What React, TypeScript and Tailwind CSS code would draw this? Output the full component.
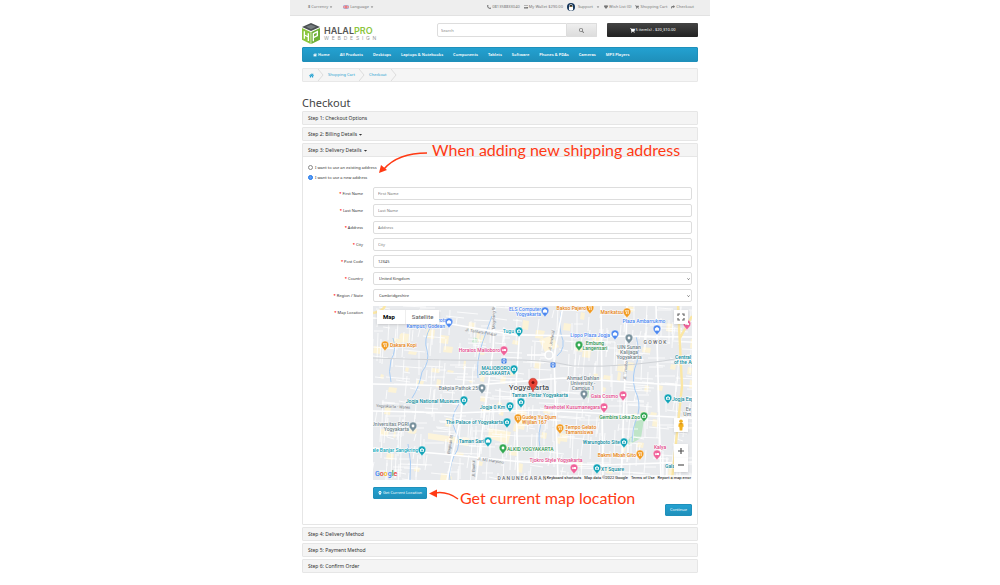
import { useState } from "react";
import type { ReactNode } from "react";
import {
  FaBed,
  FaCaretDown,
  FaCreditCard,
  FaHeart,
  FaHome,
  FaMapMarkerAlt,
  FaPhone,
  FaSearch,
  FaShare,
  FaShoppingCart,
} from "react-icons/fa";

const BLUE = "#4a86f0";
const TEAL = "#12a4b8";
const ORANGE = "#f29a1f";
const PINK = "#f0629a";
const GREEN = "#34a853";
const GREY = "#78909c";

const navItems = [
  "All Products",
  "Desktops",
  "Laptops & Notebooks",
  "Components",
  "Tablets",
  "Software",
  "Phones & PDAs",
  "Cameras",
  "MP3 Players",
];

const textFields = [
  { id: "firstname", label: "First Name", value: "" },
  { id: "lastname", label: "Last Name", value: "" },
  { id: "address", label: "Address", value: "" },
  { id: "city", label: "City", value: "" },
  { id: "postcode", label: "Post Code", value: "12345" },
];

const selectFields = [
  { id: "country", label: "Country", value: "United Kingdom" },
  { id: "zone", label: "Region / State", value: "Cambridgeshire" },
];

type Kind = "shop" | "food" | "bed" | "sight" | "dot";

// x, y is the centre of the pin's head
const pins: { x: number; y: number; color: string; kind: Kind }[] = [
  { x: 76, y: 16, color: BLUE, kind: "shop" },
  { x: 146, y: 25, color: TEAL, kind: "sight" },
  { x: 12, y: 39, color: ORANGE, kind: "food" },
  { x: 131, y: 44, color: PINK, kind: "bed" },
  { x: 141, y: 63, color: TEAL, kind: "sight" },
  { x: 109, y: 82, color: GREY, kind: "dot" },
  { x: 172, y: 5, color: BLUE, kind: "shop" },
  { x: 217, y: 2, color: ORANGE, kind: "food" },
  { x: 254, y: 6, color: ORANGE, kind: "food" },
  { x: 284, y: 23, color: BLUE, kind: "shop" },
  { x: 314, y: 18, color: PINK, kind: "bed" },
  { x: 242, y: 28, color: BLUE, kind: "shop" },
  { x: 256, y: 32, color: GREY, kind: "dot" },
  { x: 206, y: 39, color: GREEN, kind: "dot" },
  { x: 211, y: 88, color: GREY, kind: "dot" },
  { x: 91, y: 94, color: TEAL, kind: "sight" },
  { x: 148, y: 96, color: TEAL, kind: "sight" },
  { x: 137, y: 100, color: TEAL, kind: "sight" },
  { x: 145, y: 112, color: ORANGE, kind: "food" },
  { x: 134, y: 116, color: TEAL, kind: "sight" },
  { x: 40, y: 120, color: GREY, kind: "dot" },
  { x: 115, y: 135, color: TEAL, kind: "shop" },
  { x: 49, y: 144, color: TEAL, kind: "sight" },
  { x: 130, y: 142, color: GREEN, kind: "dot" },
  { x: 250, y: 89, color: PINK, kind: "bed" },
  { x: 295, y: 92, color: TEAL, kind: "sight" },
  { x: 231, y: 101, color: PINK, kind: "bed" },
  { x: 271, y: 110, color: GREEN, kind: "sight" },
  { x: 187, y: 122, color: ORANGE, kind: "food" },
  { x: 251, y: 136, color: TEAL, kind: "sight" },
  { x: 267, y: 148, color: ORANGE, kind: "food" },
  { x: 284, y: 148, color: PINK, kind: "bed" },
  { x: 201, y: 162, color: PINK, kind: "bed" },
  { x: 224, y: 162, color: TEAL, kind: "sight" },
];

type Anchor = "start" | "middle" | "end";

const labels: { x: number; y: number; text: string; color: string; anchor: Anchor }[] = [
  { x: 74, y: 16, text: "irota", color: BLUE, anchor: "end" },
  { x: 72, y: 22, text: "Kampus) Godean", color: BLUE, anchor: "end" },
  { x: 168, y: 5, text: "ELS Computer", color: BLUE, anchor: "end" },
  { x: 168, y: 10, text: "Yogyakarta", color: BLUE, anchor: "end" },
  { x: 141, y: 27, text: "Tugu", color: TEAL, anchor: "end" },
  { x: 17, y: 41, text: "Dakara Kopi", color: "#e37e0c", anchor: "start" },
  { x: 127, y: 46, text: "Horaios Malioboro", color: "#e0478a", anchor: "end" },
  { x: 137, y: 64, text: "MALIOBORO", color: "#0b8a9c", anchor: "end" },
  { x: 137, y: 69, text: "JOGJAKARTA", color: "#0b8a9c", anchor: "end" },
  { x: 105, y: 84, text: "Bakpia Pathok 25", color: "#6f7f88", anchor: "end" },
  { x: 213, y: 4, text: "Bakso Pajero", color: "#e37e0c", anchor: "end" },
  { x: 250, y: 8, text: "Marikatsu", color: "#e37e0c", anchor: "end" },
  { x: 271, y: 17, text: "Plaza Ambarrukmo", color: BLUE, anchor: "middle" },
  { x: 237, y: 31, text: "Lippo Plaza Jogja", color: BLUE, anchor: "end" },
  { x: 222, y: 39, text: "Embung", color: "#2d9150", anchor: "middle" },
  { x: 222, y: 44, text: "Langensari", color: "#2d9150", anchor: "middle" },
  { x: 256, y: 43, text: "UIN Sunan", color: "#6f7f88", anchor: "middle" },
  { x: 256, y: 48, text: "Kalijaga", color: "#6f7f88", anchor: "middle" },
  { x: 256, y: 53, text: "Yogyakarta", color: "#6f7f88", anchor: "middle" },
  { x: 282, y: 38, text: "G O W O K", color: "#5f6368", anchor: "middle" },
  { x: 302, y: 53, text: "Central", color: "#0b8a9c", anchor: "start" },
  { x: 301, y: 58, text: "of the Ar", color: "#0b8a9c", anchor: "start" },
  { x: 210, y: 74, text: "Ahmad Dahlan", color: "#6f7f88", anchor: "middle" },
  { x: 210, y: 79, text: "University -", color: "#6f7f88", anchor: "middle" },
  { x: 210, y: 84, text: "Campus 1", color: "#6f7f88", anchor: "middle" },
  { x: 195, y: 91, text: "Taman Pintar Yogyakarta", color: "#0b8a9c", anchor: "end" },
  { x: 86, y: 97, text: "Jogja National Museum", color: "#0b8a9c", anchor: "end" },
  { x: 132, y: 103, text: "Jogja 0 Km", color: "#0b8a9c", anchor: "end" },
  { x: 149, y: 113, text: "Gudeg Yu Djum", color: "#e37e0c", anchor: "start" },
  { x: 149, y: 118, text: "Wijilan 167", color: "#e37e0c", anchor: "start" },
  { x: 130, y: 118, text: "The Palace of Yogyakarta", color: "#0b8a9c", anchor: "end" },
  { x: 36, y: 120, text: "Universitas PGRI", color: "#6f7f88", anchor: "end" },
  { x: 36, y: 125, text: "Yogyakarta", color: "#6f7f88", anchor: "end" },
  { x: 111, y: 137, text: "Taman Sari", color: "#0b8a9c", anchor: "end" },
  { x: 45, y: 146, text: "ale Banjar Sangkring", color: TEAL, anchor: "end" },
  { x: 134, y: 145, text: "ALKID YOGYAKARTA", color: "#2d9150", anchor: "start" },
  { x: 245, y: 92, text: "Gaia Cosmo", color: "#e0478a", anchor: "end" },
  { x: 227, y: 103, text: "favehotel Kusumanegara", color: "#e0478a", anchor: "end" },
  { x: 299, y: 95, text: "Jogja Exp", color: "#0b8a9c", anchor: "start" },
  { x: 267, y: 113, text: "Gembira Loka Zoo", color: "#2d9150", anchor: "end" },
  { x: 318, y: 105, text: "Ev", color: "#6f7f88", anchor: "end" },
  { x: 318, y: 110, text: "Um", color: "#6f7f88", anchor: "end" },
  { x: 192, y: 123, text: "Tempo Gelato", color: "#e37e0c", anchor: "start" },
  { x: 192, y: 128, text: "Tamansiswa", color: "#e37e0c", anchor: "start" },
  { x: 247, y: 138, text: "Warungboto Site", color: "#0b8a9c", anchor: "end" },
  { x: 263, y: 151, text: "Bakmi Mbah Gito", color: "#e37e0c", anchor: "end" },
  { x: 287, y: 143, text: "Kalya", color: "#e0478a", anchor: "middle" },
  { x: 183, y: 156, text: "Tjokro Style Yogyakarta", color: "#e0478a", anchor: "middle" },
  { x: 228, y: 165, text: "XT Square", color: "#0b8a9c", anchor: "start" },
  { x: 292, y: 162, text: "Gala", color: "#0b8a9c", anchor: "start" },
  { x: 149, y: 174, text: "D A N U N E G A R A N", color: "#5f6368", anchor: "middle" },
];

// Small seeded generator so the street grid is the same on every render
function makeStreets() {
  let seed = 17;
  const rand = () => {
    seed = (seed * 16807) % 2147483647;
    return seed / 2147483647;
  };
  let minor = "";
  let yellow = "";
  for (let i = 0; i < 560; i++) {
    const x = Math.round(rand() * 319);
    const y = Math.round(rand() * 174);
    const len = Math.round(6 + rand() * 22);
    const skew = Math.round(rand() * 2);
    minor += rand() > 0.45 ? `M${x} ${y}l${-skew} ${len}` : `M${x} ${y}l${len} ${skew}`;
  }
  for (let i = 0; i < 90; i++) {
    const x = Math.round(rand() * 319);
    const y = Math.round(rand() * 174);
    const w = Math.round(2 + rand() * 7);
    const h = Math.round(2 + rand() * 7);
    yellow += `M${x} ${y}l${w} 1l-1 ${h}l${-w} -1z`;
  }
  return { minor, yellow };
}

const streets = makeStreets();

function PinGlyph({ kind }: { kind: Kind }) {
  if (kind === "shop") return <path d="M-1.8 -1h3.6l.3 2.6h-4.2zM-.9 -1q.9 -1.8 1.8 0" fill="#fff" stroke="#fff" strokeWidth=".3" />;
  if (kind === "food") return <path d="M-1.2 -2v1.6q.1 .6 .6 .6v1.9M0 -2v1.4M1.2 -2v4.1" stroke="#fff" strokeWidth=".8" fill="none" />;
  if (kind === "bed") return <FaBed x={-2.2} y={-2.2} width={4.4} height={4.4} size={4.4} color="#fff" />;
  if (kind === "sight") return <path d="M-1.9 -1h.9l.5 -.7h1l.5 .7h.9v2.7h-3.8zM0 -.5a.8 .8 0 1 0 .1 0z" fill="#fff" fillRule="evenodd" />;
  return <circle r="1.4" fill="#fff" />;
}

function MapDrawing() {
  return (
    <svg viewBox="0 0 319 174" preserveAspectRatio="xMidYMid slice" className="block h-[174px] w-full bg-[#e8eaed]" role="img" aria-label="Map of Yogyakarta">
      <path d={streets.yellow} fill="#fcf3d7" />
      <path d="M166 34l13 -5l7 12l-14 5zM144 103l10 3l-3 18l-9 -2zM55 127l34 5v6l-34 -5zM116 122l22 4l-3 12l-20 -6z" fill="#fdf4da" />
      <path d="M261 116l10 -3l-3 19l-12 7l-2 -4l6 -6zM101 31l4 2l-2 5l-4 -2zM211 80l5 2v10l-6 -2z" fill="#bfe5c8" />
      <path d={streets.minor} stroke="#fff" strokeWidth=".8" fill="none" />
      <path
        d="M58 20q-8 14 -4 24q3 12 -5 22q-3 16 -10 26M86 98q-10 14 -4 26q8 14 -1 26q-6 14 -4 24M263 30q4 14 1 26q-6 14 -2 28q6 12 3 24q-6 14 -6 28M20 32q4 12 -2 22q-3 12 0 22M190 0q-5 16 -2 28q6 14 -4 22M119 10q-6 16 -10 28q-6 18 -4 34M170 112q-6 14 -3 30M35 138q4 18 2 36"
        stroke="#a9cdf5"
        strokeWidth="1"
        fill="none"
      />
      <path
        d="M0 12l78 6l64 11l177 2M0 105l83 2l80 -3l156 8M0 142l70 6l80 8l80 3l89 -3M122 0l-2 44l-8 60l-9 70M92 60l-4 50l-14 64M147 20l-4 60l2 94M190 0l-9 50l4 124M228 0l2 174M254 0l-2 70l-4 104M0 78l90 2l100 -8l129 8M283 0l5 174M176 49h-22"
        stroke="#fff"
        strokeWidth="1.6"
        fill="none"
      />
      <path d="M305 0l4 80l-10 94M319 10l-12 22M0 7q10 -2 12 -7" stroke="#fbe7a5" strokeWidth="2.4" fill="none" />
      <path d="M0 52q90 3 130 2t70 6q60 2 119 -10" stroke="#cfd2d6" strokeWidth="1" fill="none" />
      <circle cx="176" cy="49" r="4" fill="#e8eaed" stroke="#fff" strokeWidth="1.6" />

      <g fontFamily="Roboto, sans-serif" fontSize="4" fill="#777c82">
        <text x="92" y="25" transform="rotate(9 92 25)">Jl. Tentara Pelajar</text>
        <text x="3" y="101" transform="rotate(3 3 101)">Yogyakarta - Wates</text>
        <text x="104" y="154" transform="rotate(8 104 154)">Jl. MT Haryono</text>
        <text x="122" y="23" transform="rotate(-90 122 23)">Magelang St</text>
        <text x="77" y="148" transform="rotate(-82 77 148)">Bugisan St</text>
        <text x="102" y="171" transform="rotate(-90 102 171)">Jl. Bantul</text>
        <text x="178" y="45" transform="rotate(-80 178 45)">Jl. Jenderal</text>
        <text x="253" y="74" transform="rotate(-85 253 74)">Jl. Timoho</text>
      </g>

      <g fontFamily="Roboto, sans-serif" fontSize="5" fontWeight="500" stroke="#fff" strokeWidth="1" paintOrder="stroke" strokeLinejoin="round">
        {labels.map((label) => (
          <text key={label.text + label.y} x={label.x} y={label.y} fill={label.color} textAnchor={label.anchor}>
            {label.text}
          </text>
        ))}
        <text x="156" y="84" fontSize="8" fill="#4c5156" textAnchor="middle">
          Yogyakarta
        </text>
      </g>

      {pins.map((pin) => (
        <g key={`${pin.x}-${pin.y}`} transform={`translate(${pin.x} ${pin.y})`}>
          <path d="M0 6.5C-.6 4 -3.8 3 -3.8 -.2A3.8 3.8 0 0 1 3.8 -.2C3.8 3 .6 4 0 6.5z" fill={pin.color} stroke="#fff" strokeWidth=".4" />
          <PinGlyph kind={pin.kind} />
        </g>
      ))}
      {[[131, 55], [180, 59]].map(([x, y]) => (
        <g key={x} transform={`translate(${x} ${y})`}>
          <rect x="-2.5" y="-2.5" width="5" height="5" rx="1" fill="#3f7ee8" />
          <path d="M-1 -1.4h2v2.2h-2zM-1 1.6h2" stroke="#fff" strokeWidth=".6" fill="none" />
        </g>
      ))}
      <path d="M160 86C159.400 81.500 155.700 80.500 155.700 76.500A4.300 4.300 0 0 1 164.300 76.500C164.300 80.500 160.600 81.500 160 86z" fill="#ea4335" stroke="#b3261e" strokeWidth=".4" />
      <circle cx="160" cy="76.500" r="1.500" fill="#7c1510" />
    </svg>
  );
}

function LocationMap() {
  const controlClass = "flex w-3.5 items-center justify-center bg-white shadow-sm";
  return (
    <div className="relative min-w-0 overflow-hidden font-[Roboto,sans-serif]">
      <MapDrawing />
      <div className="absolute left-1 top-1 flex h-3.5 items-center bg-white text-[6px] leading-none shadow-sm">
        <button type="button" className="pl-1.5 pr-2.5 font-bold text-black">Map</button>
        <button type="button" className="h-full border-l border-[#eee] px-1.5 text-[#565656]">Satellite</button>
      </div>
      <button type="button" aria-label="Toggle fullscreen view" className={`absolute right-1 top-1 h-3.5 ${controlClass}`}>
        <svg viewBox="0 0 8 8" className="size-2" fill="none" stroke="#666" strokeWidth="1.2">
          <path d="M1 3V1h2M5 1h2v2M7 5v2H5M3 7H1V5" />
        </svg>
      </button>
      <div className="absolute bottom-2 right-1 flex flex-col gap-3">
        <button type="button" aria-label="Street View" className={`h-3.5 ${controlClass}`}>
          <svg viewBox="0 0 8 12" className="h-3 w-2">
            <circle cx="4" cy="2.300" r="1.800" fill="#f2b01e" />
            <path d="M1.800 4.200h4.400l.5 3.500h-1l-.4 3.800H2.700L2.300 7.700h-1z" fill="#f2b01e" />
            <path d="M2.500 4.200h3L4 5.600z" fill="#c77f12" />
          </svg>
        </button>
        <div>
          <button type="button" aria-label="Zoom in" className={`h-3.5 ${controlClass}`}>
            <svg viewBox="0 0 8 8" className="size-2" stroke="#555" strokeWidth="1.2"><path d="M4 1v6M1 4h6" /></svg>
          </button>
          <button type="button" aria-label="Zoom out" className={`h-3.5 ${controlClass}`}>
            <svg viewBox="0 0 8 8" className="size-2" stroke="#555" strokeWidth="1.2"><path d="M1 4h6" /></svg>
          </button>
        </div>
      </div>
      <div className="absolute bottom-0.5 left-0.5 text-[7px] font-medium leading-none">
        <span className="text-[#4285f4]">G</span>
        <span className="text-[#ea4335]">o</span>
        <span className="text-[#fbbc05]">o</span>
        <span className="text-[#4285f4]">g</span>
        <span className="text-[#34a853]">l</span>
        <span className="text-[#ea4335]">e</span>
      </div>
      <div className="absolute bottom-0 right-0 flex gap-[3px] bg-white/70 px-px text-[4px] leading-[5px] text-black">
        <button type="button">Keyboard shortcuts</button>
        <span>Map data ©2022 Google</span>
        <a href="#terms">Terms of Use</a>
        <a href="#report">Report a map error</a>
      </div>
    </div>
  );
}

function Logo() {
  return (
    <a href="#home" className="flex items-center gap-1">
      <svg viewBox="0 0 54 63" className="h-[21px] w-[18px]">
        <path d="M27 0L54 12L27 24L0 12z" fill="#4b5052" />
        <path d="M27 5l15 6.500l-15 7l-15 -7z" fill="#777d80" />
        <path d="M0 15l26 12v36L0 50z" fill="#8cc63f" />
        <path d="M54 15L28 27v36l26 -13z" fill="#6fb036" />
        <path d="M7 25v22M7 36l12 6M19 31v23" stroke="#fff" strokeWidth="4" fill="none" />
        <path d="M34 55V32l12 -6v12l-12 6" stroke="#fff" strokeWidth="4" fill="none" />
      </svg>
      <span className="font-[Inter,sans-serif] leading-none">
        <span className="block text-[9px] font-semibold leading-[9px] text-[#555]">
          HALAL<span className="text-[#8cc63f]">PRO</span>
        </span>
        <span className="block whitespace-pre text-[5px] leading-[6px] text-[#999]">{"W  E  B  D  E  S  I  G  N"}</span>
      </span>
    </a>
  );
}

function Flag() {
  return (
    <svg viewBox="0 0 16 11" className="h-1 w-1.5">
      <path d="M0 0h16v11H0z" fill="#5571b8" />
      <path d="M0 0l16 11M16 0L0 11" stroke="#fff" strokeWidth="2.500" />
      <path d="M8 0v11M0 5.500h16" stroke="#fff" strokeWidth="4" />
      <path d="M8 0v11M0 5.500h16" stroke="#e0323c" strokeWidth="2.200" />
    </svg>
  );
}

function Avatar() {
  return (
    <svg viewBox="0 0 24 24" className="size-2">
      <circle cx="12" cy="12" r="12" fill="#15365c" />
      <path d="M6 21q-1 -13 3 -17q3 -2 6 0q4 4 3 17q-6 4 -12 0z" fill="#fff" />
      <path d="M8 8q4 -7 8 0v4H8z" fill="#1c2733" />
      <path d="M10 10l2 -2l2 2l-2 3z" fill="#f0ac2d" />
    </svg>
  );
}

function TopBar() {
  const linkClass = "flex items-center gap-px";
  return (
    <div className="flex h-4 items-center justify-between border-b border-[#e2e2e2] bg-[#eee] pb-px pl-[18px] pr-4 text-[#777]">
      <div className="flex items-center gap-2.5">
        <button type="button" className={linkClass}><b>$</b> Currency <FaCaretDown /></button>
        <button type="button" className={linkClass}><Flag /> Language <FaCaretDown /></button>
      </div>
      <div className="flex items-center gap-1">
        <a href="tel:081358833040" className={linkClass}><FaPhone className="-scale-x-100" /> 081358833040</a>
        <a href="#wallet" className={linkClass}><FaCreditCard /> My Wallet $290.00</a>
        <button type="button" className="flex items-center gap-[3px]"><Avatar /> Support <FaCaretDown /></button>
        <a href="#wishlist" className={linkClass}><FaHeart /> Wish List (0)</a>
        <a href="#cart" className={linkClass}><FaShoppingCart /> Shopping Cart</a>
        <a href="#checkout" className={linkClass}><FaShare /> Checkout</a>
      </div>
    </div>
  );
}

function CrumbArrow() {
  return (
    <svg viewBox="0 0 6 12" className="h-3 w-1.5" fill="none" stroke="#ddd">
      <path d="M0 0l5 6l-5 6" />
    </svg>
  );
}

function Panel({ title, caret, note, children }: { title: string; caret?: boolean; note?: ReactNode; children?: ReactNode }) {
  return (
    <section className="rounded-[1px] border border-[#e6e6e6]">
      <div className="relative flex h-3 items-center bg-[#f4f4f4] px-[5px]">
        <h2 className="text-[5px] text-[#333]">
          <button type="button" className="flex items-center">
            {title}
            {caret && <FaCaretDown className="ml-px" />}
          </button>
        </h2>
        {note}
      </div>
      {children}
    </section>
  );
}

function FieldLabel({ htmlFor, text }: { htmlFor?: string; text: string }) {
  return (
    <label htmlFor={htmlFor} className="h-[13px] text-right leading-[13px]">
      <span className="font-bold text-[#f00]">* </span>
      {text}
    </label>
  );
}

const boxClass = "h-[13px] w-full min-w-0 rounded-[2px] border border-[#ddd] bg-white text-[#333] outline-none";
const blueButton = "flex items-center justify-center gap-px rounded-[1px] border border-[#1f90bb] bg-linear-to-b from-[#23a1d1] to-[#1f90bb] text-white";

function DeliveryForm() {
  const [mode, setMode] = useState("new");

  return (
    <form className="border-t border-[#e6e6e6] px-[5px] pb-2 pt-2 text-[#333]" onSubmit={(e) => e.preventDefault()}>
      <div className="flex flex-col items-start gap-[5px] pb-[7px]">
        {[
          ["existing", "I want to use an existing address"],
          ["new", "I want to use a new address"],
        ].map(([value, text]) => (
          <label key={value} className="flex h-[5px] items-center gap-0.5">
            <input
              type="radio"
              name="shipping_address"
              value={value}
              checked={mode === value}
              onChange={() => setMode(value)}
              className="size-[5px] appearance-none rounded-full border border-[#888] checked:border-[#1a73e8] checked:bg-[#5b9df5]"
            />
            {text}
          </label>
        ))}
      </div>

      <div className="grid grid-cols-[55px_minmax(0,1fr)] gap-x-2.5 gap-y-1">
        {textFields.map((field) => (
          <div key={field.id} className="contents">
            <FieldLabel htmlFor={field.id} text={field.label} />
            <input id={field.id} type="text" placeholder={field.label} defaultValue={field.value} className={`px-1 placeholder:text-[#777] ${boxClass}`} />
          </div>
        ))}
        {selectFields.map((field) => (
          <div key={field.id} className="contents">
            <FieldLabel htmlFor={field.id} text={field.label} />
            <div className="relative">
              <select id={field.id} defaultValue={field.value} className={`block appearance-none px-[5px] ${boxClass}`}>
                <option>{field.value}</option>
              </select>
              <svg viewBox="0 0 8 5" className="pointer-events-none absolute right-0.5 top-1.5 h-0.5 w-[3px]" fill="none" stroke="#444" strokeWidth="2">
                <path d="M1 1l3 3l3 -3" />
              </svg>
            </div>
          </div>
        ))}
        <FieldLabel text="Map Location" />
        <LocationMap />
        <div className="relative col-start-2 flex pt-[3px]">
          <button type="button" className={`h-3 w-[54px] ${blueButton}`}>
            <FaMapMarkerAlt /> Get Current Location
          </button>
          <div className="absolute left-[56px] top-0 flex text-[#ff3a14]">
            <svg viewBox="0 0 30 18" className="h-[18px] w-[30px]" fill="none">
              <path d="M6 9q12 -2 23 6" stroke="currentColor" strokeWidth="1.500" />
              <path d="M0 9.500l8 -4v8z" fill="currentColor" />
            </svg>
            <span className="ml-px mt-1 whitespace-nowrap font-[Lato,sans-serif] text-[16px] leading-5">Get current map location</span>
          </div>
        </div>
      </div>
      <div className="flex justify-end pt-[5px]">
        <button type="submit" className={`h-3 w-[27px] ${blueButton}`}>Continue</button>
      </div>
    </form>
  );
}

function ShippingNote() {
  return (
    <div className="pointer-events-none absolute left-[75px] top-0 flex text-[#ff3a14]">
      <svg viewBox="0 0 50 32" className="h-8 w-[50px]" fill="none">
        <path d="M6 25q14 -16 43 -16" stroke="currentColor" strokeWidth="1.500" />
        <path d="M1 29l2 -8l6 5z" fill="currentColor" />
      </svg>
      <span className="-mt-1 ml-1 whitespace-nowrap font-[Lato,sans-serif] text-[16px] leading-5">When adding new shipping address</span>
    </div>
  );
}

export default function App() {
  return (
    <div className="min-h-screen bg-white">
      <div className="mx-auto w-full max-w-[420px] font-['Noto_Sans','Open_Sans',sans-serif] text-[4px] leading-none text-[#555]">
        <TopBar />
        <div className="px-3 pb-3">
          <header className="flex items-start gap-2.5 pt-[7px]">
            <div className="w-[125px]">
              <Logo />
            </div>
            <form className="flex h-3.5 min-w-0 flex-1" onSubmit={(e) => e.preventDefault()}>
              <input type="text" placeholder="Search" aria-label="Search" className="min-w-0 flex-1 rounded-l-[2px] border border-[#ddd] px-[3px] placeholder:text-[#888]" />
              <button type="submit" aria-label="Search" className="flex w-[30px] items-center justify-center rounded-r-[1px] border border-l-0 border-[#ddd] bg-linear-to-b from-[#eee] to-[#ddd] text-[5px] text-[#777]">
                <FaSearch />
              </button>
            </form>
            <button type="button" className="flex h-3.5 w-[91px] items-center justify-center gap-px rounded-[1px] bg-linear-to-b from-[#444] to-[#222] text-white">
              <FaShoppingCart className="text-[5px]" /> 5 item(s) - $20,310.00
            </button>
          </header>

          <nav className="mt-[3px] flex h-[15px] items-center gap-2.5 rounded-[1px] border border-[#1f90bb] bg-linear-to-b from-[#23a1d1] to-[#1f90bb] px-2.5 font-semibold text-white">
            <a href="#home" className="flex items-center gap-px"><FaHome /> Home</a>
            {navItems.map((item) => (
              <a key={item} href="#category" className="whitespace-nowrap">{item}</a>
            ))}
          </nav>

          <nav aria-label="Breadcrumb" className="mt-1.5 flex h-3.5 items-center gap-1 rounded-[1px] border border-[#e8e8e8] bg-[#f5f5f5] pl-1.5 text-[#23a1d1]">
            <a href="#home" aria-label="Home" className="text-[5px]"><FaHome /></a>
            <CrumbArrow />
            <a href="#cart">Shopping Cart</a>
            <CrumbArrow />
            <a href="#checkout">Checkout</a>
            <CrumbArrow />
          </nav>

          <h1 className="mt-3 text-[11px] leading-[17px] text-[#444]">Checkout</h1>

          <div className="flex flex-col gap-0.5">
            <Panel title="Step 1: Checkout Options" />
            <Panel title="Step 2: Billing Details" caret />
            <Panel title="Step 3: Delivery Details" caret note={<ShippingNote />}>
              <DeliveryForm />
            </Panel>
            <Panel title="Step 4: Delivery Method" />
            <Panel title="Step 5: Payment Method" />
            <Panel title="Step 6: Confirm Order" />
          </div>
        </div>
      </div>
    </div>
  );
}
